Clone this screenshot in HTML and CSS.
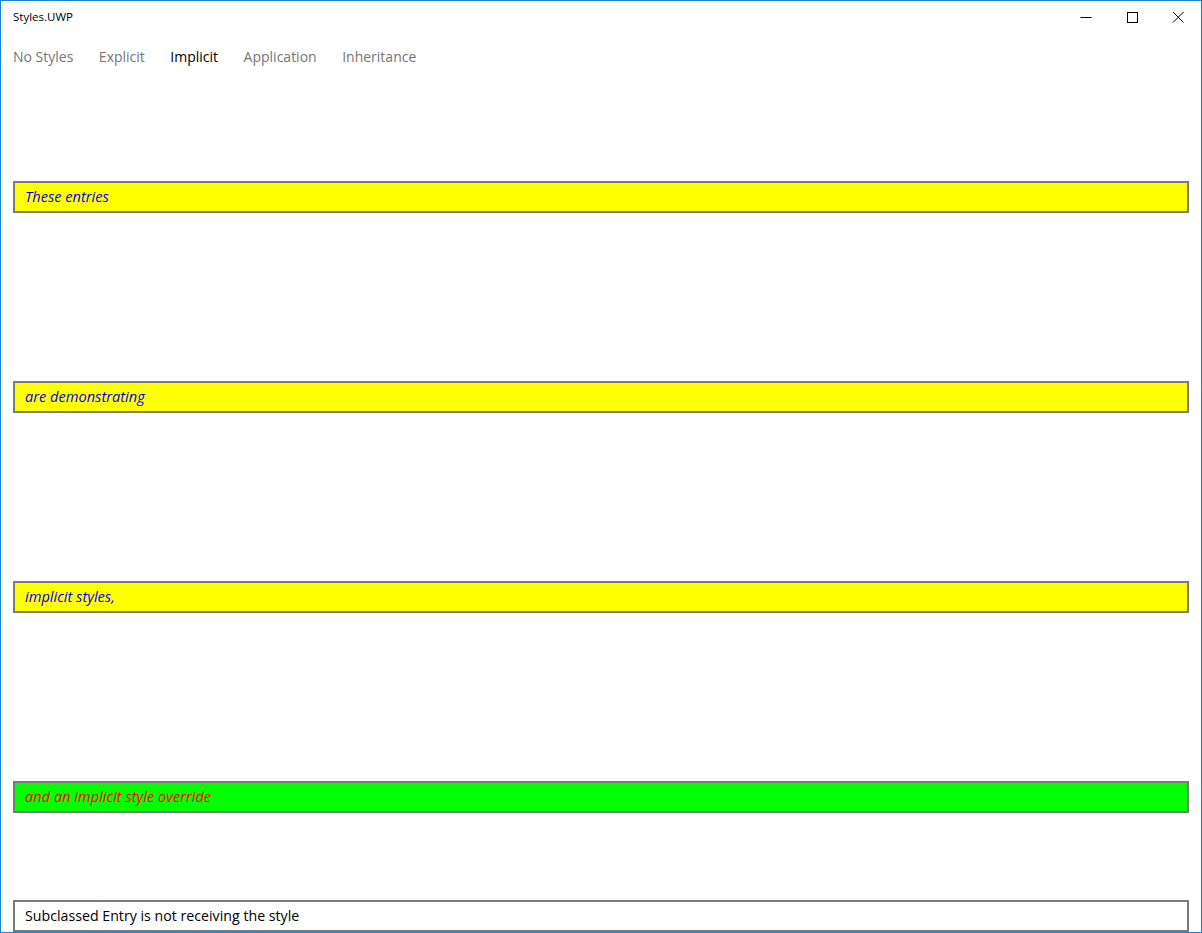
FILE: index.html
```html
<!DOCTYPE html>
<html>
<head>
<meta charset="utf-8">
<link rel="stylesheet" href="styles.css">
</head>
<body>
<div class="window">
  <div class="titlebar">
    <div class="title">Styles.UWP</div>
    <div class="controls">
      <div class="ctl"><svg width="12" height="12" viewBox="0 0 12 12"><path d="M0.5 6.5H11.5" stroke="#000" stroke-width="1"/></svg></div>
      <div class="ctl"><svg width="12" height="12" viewBox="0 0 12 12"><rect x="1.5" y="1.5" width="10" height="10" fill="none" stroke="#000" stroke-width="1"/></svg></div>
      <div class="ctl"><svg width="12" height="12" viewBox="0 0 12 12"><path d="M1 1L11.5 11.5M11.5 1L1 11.5" stroke="#000" stroke-width="1"/></svg></div>
    </div>
  </div>
  <nav class="tabs">
    <span class="tab">No Styles</span>
    <span class="tab">Explicit</span>
    <span class="tab active">Implicit</span>
    <span class="tab">Application</span>
    <span class="tab">Inheritance</span>
  </nav>
  <div class="content">
    <div class="entry styled first">These entries</div>
    <div class="entry styled">are demonstrating</div>
    <div class="entry styled">implicit styles,</div>
    <div class="entry override">and an implicit style override</div>
    <div class="entry plain">Subclassed Entry is not receiving the style</div>
  </div>
</div>
</body>
</html>
```
FILE: styles.css
```css
html, body {
  margin: 0;
  padding: 0;
  background: #ffffff;
}
.window {
  box-sizing: border-box;
  width: 1202px;
  height: 933px;
  border: 1px solid #1883d7;
  overflow: hidden;
  font-family: "Open Sans", "Noto Sans", sans-serif;
  display: flex;
  flex-direction: column;
}
.titlebar {
  height: 31px;
  display: flex;
  align-items: center;
  justify-content: space-between;
}
.title {
  margin-left: 12px;
  font-size: 11.5px;
  color: #000;
}
.controls {
  display: flex;
  height: 31px;
}
.ctl {
  width: 46px;
  height: 31px;
  display: flex;
  align-items: center;
  justify-content: center;
}
.tabs {
  display: flex;
  gap: 25.5px;
  height: 48px;
  align-items: center;
  padding-left: 12px;
}
.tab {
  font-size: 14px;
  color: #767676;
}
.tab.active {
  color: #000;
}
.content {
  display: flex;
  flex-direction: column;
  padding: 0 12px;
}
.entry {
  box-sizing: border-box;
  height: 32px;
  border: 2px solid #7a7a7a;
  padding-left: 10px;
  font-size: 14.6px;
  line-height: 27px;
  margin-top: 168px;
}
.entry.first {
  margin-top: 101px;
}
.styled {
  background: #ffff00;
  color: #0000ff;
  font-style: italic;
}
.override {
  background: #00ff00;
  color: #ff0000;
  font-style: italic;
}
.entry.plain {
  background: #ffffff;
  color: #000000;
  font-size: 14.2px;
  margin-top: 87px;
}
```
